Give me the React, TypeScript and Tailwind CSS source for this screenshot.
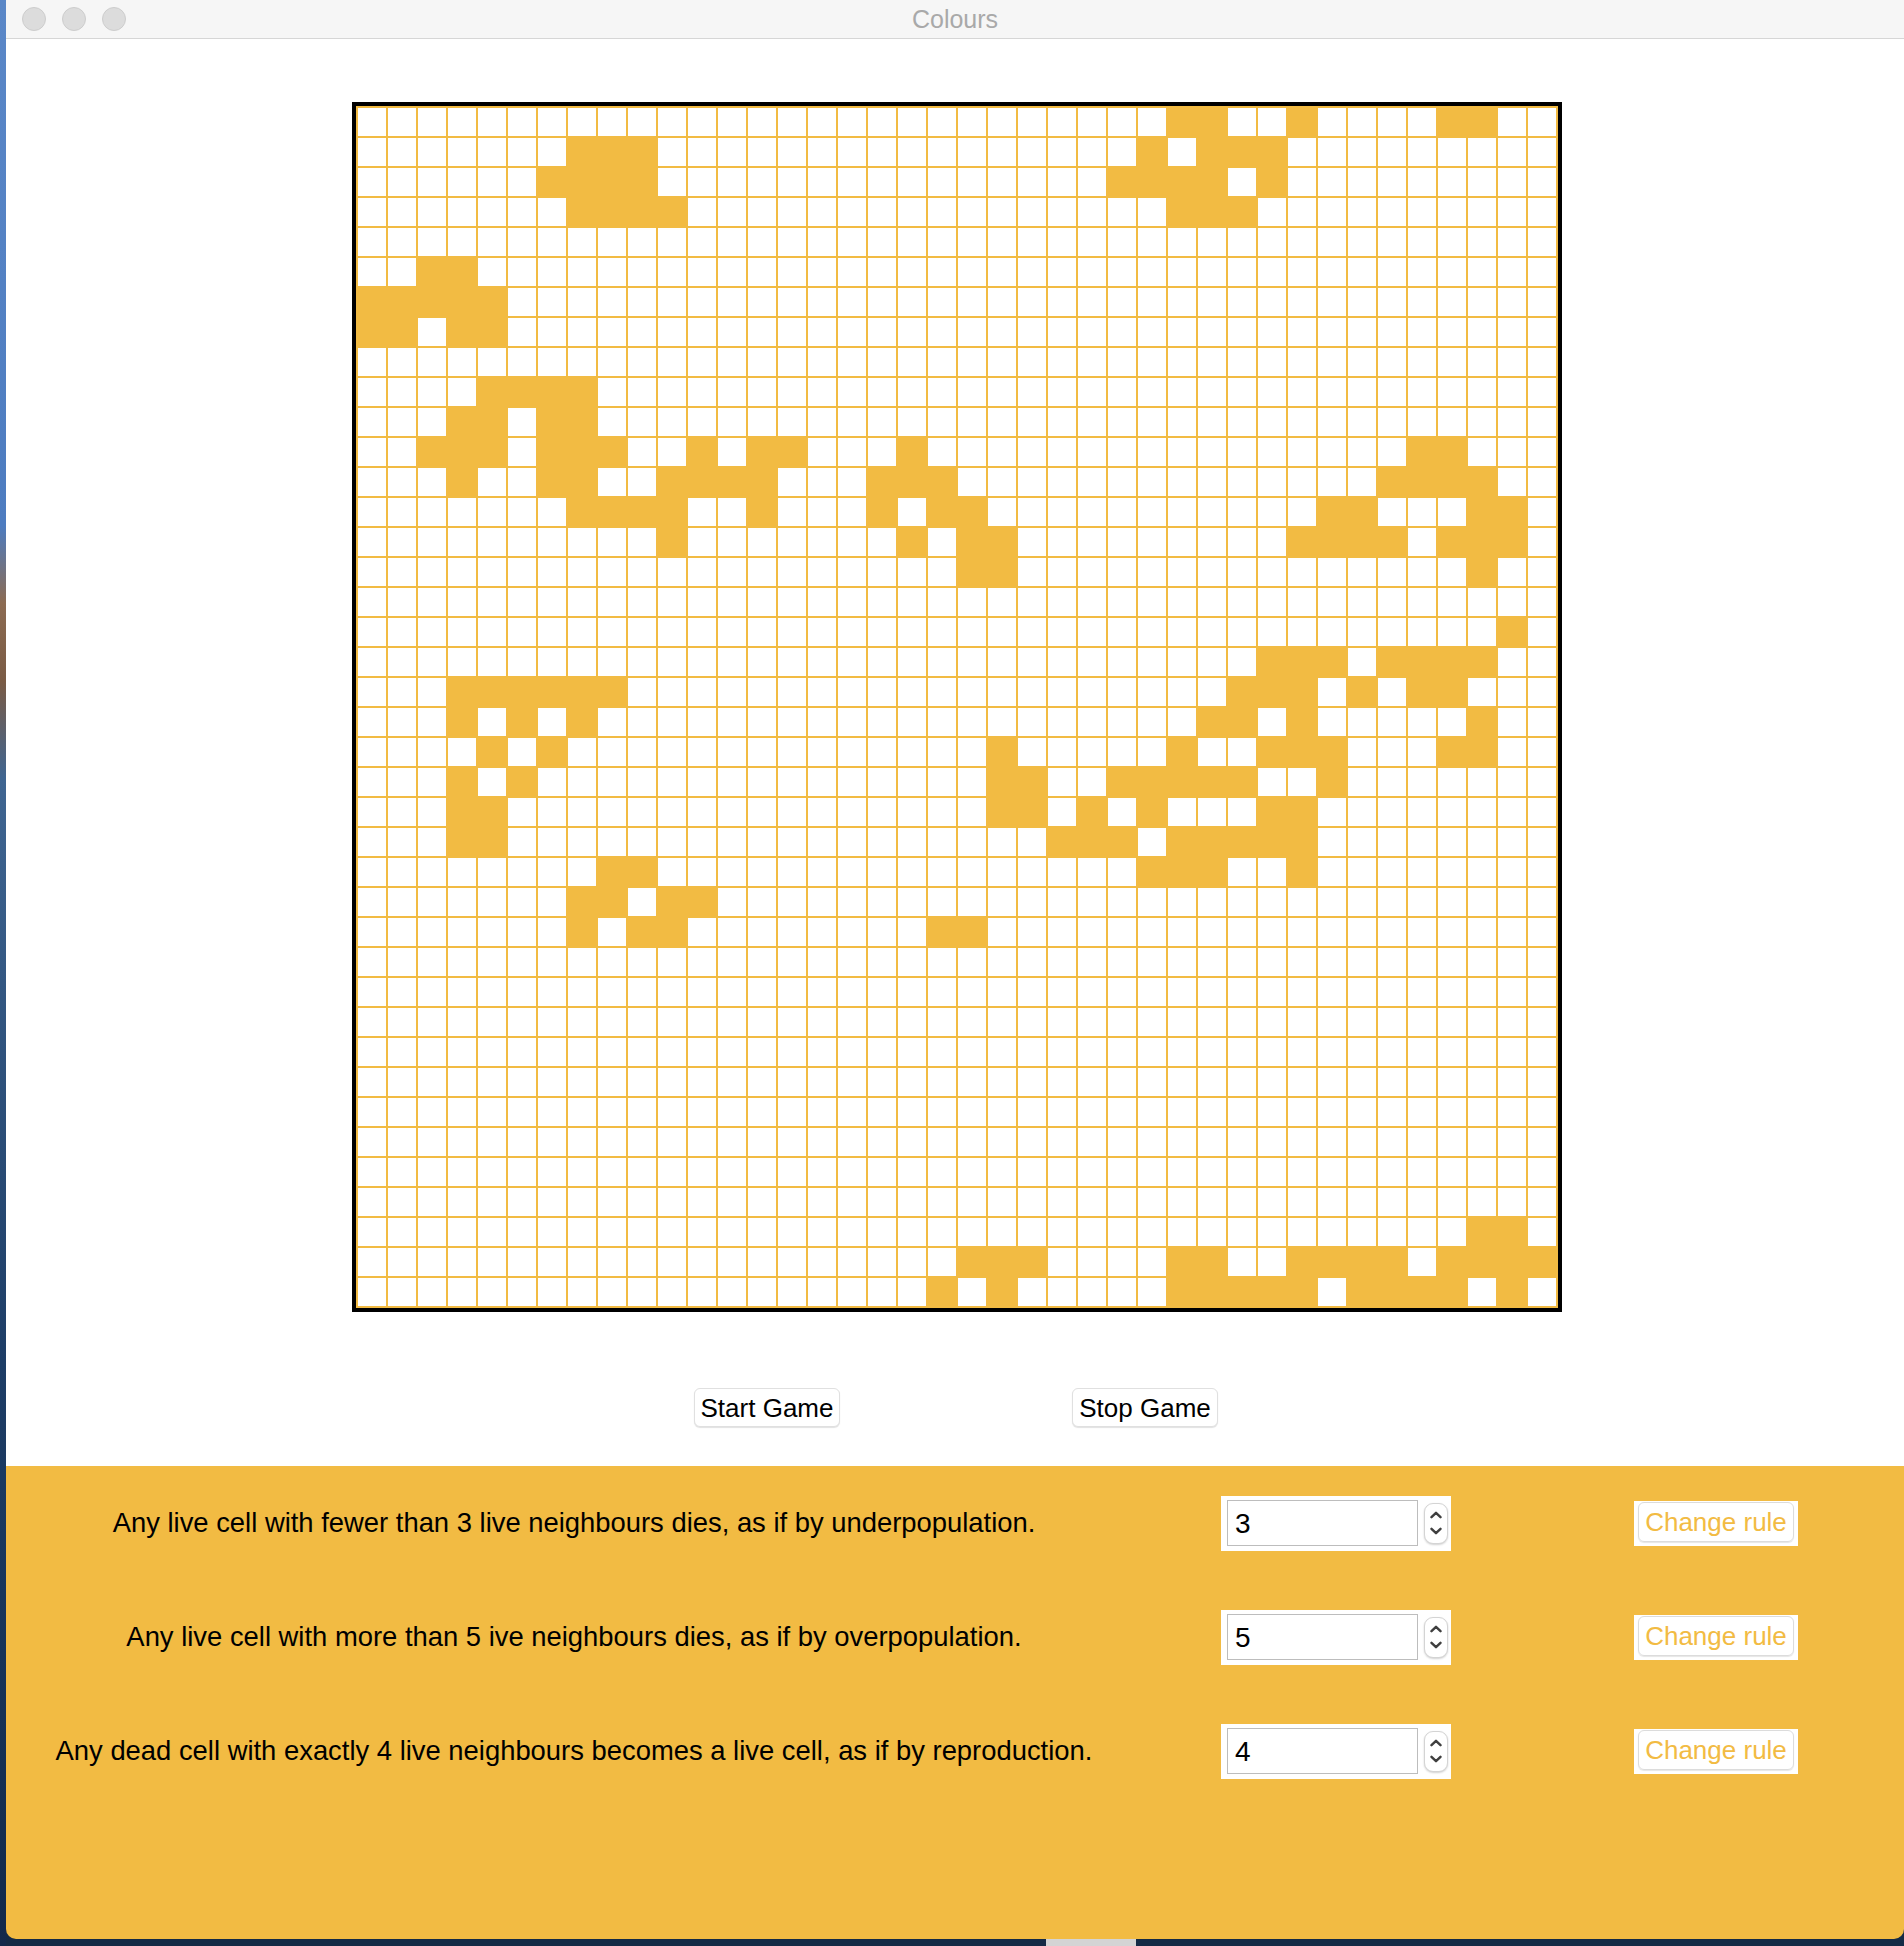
const SIZE = 40;

// live cells per row (row -> columns)
const LIVE: Record<number, number[]> = {
  0: [27, 28, 31, 36, 37],
  1: [7, 8, 9, 26, 28, 29, 30],
  2: [6, 7, 8, 9, 25, 26, 27, 28, 30],
  3: [7, 8, 9, 10, 27, 28, 29],
  5: [2, 3],
  6: [0, 1, 2, 3, 4],
  7: [0, 1, 3, 4],
  9: [4, 5, 6, 7],
  10: [3, 4, 6, 7],
  11: [2, 3, 4, 6, 7, 8, 11, 13, 14, 18, 35, 36],
  12: [3, 6, 7, 10, 11, 12, 13, 17, 18, 19, 34, 35, 36, 37],
  13: [7, 8, 9, 10, 13, 17, 19, 20, 32, 33, 37, 38],
  14: [10, 18, 20, 21, 31, 32, 33, 34, 36, 37, 38],
  15: [20, 21, 37],
  17: [38],
  18: [30, 31, 32, 34, 35, 36, 37],
  19: [3, 4, 5, 6, 7, 8, 29, 30, 31, 33, 35, 36],
  20: [3, 5, 7, 28, 29, 31, 37],
  21: [4, 6, 21, 27, 30, 31, 32, 36, 37],
  22: [3, 5, 21, 22, 25, 26, 27, 28, 29, 32],
  23: [3, 4, 21, 22, 24, 26, 30, 31],
  24: [3, 4, 23, 24, 25, 27, 28, 29, 30, 31],
  25: [8, 9, 26, 27, 28, 31],
  26: [7, 8, 10, 11],
  27: [7, 9, 10, 19, 20],
  37: [37, 38],
  38: [20, 21, 22, 27, 28, 31, 32, 33, 34, 36, 37, 38, 39],
  39: [19, 21, 27, 28, 29, 30, 31, 33, 34, 35, 36, 38],
};

const RULES = [
  { text: 'Any live cell with fewer than 3 live neighbours dies, as if by underpopulation.', value: 3 },
  { text: 'Any live cell with more than 5 ive neighbours dies, as if by overpopulation.', value: 5 },
  { text: 'Any dead cell with exactly 4 live neighbours becomes a live cell, as if by reproduction.', value: 4 },
];

function Board() {
  const cells = [];
  for (let r = 0; r < SIZE; r++) {
    const row = LIVE[r] ?? [];
    for (let c = 0; c < SIZE; c++) {
      const alive = row.includes(c);
      cells.push(
        <div key={`${r}-${c}`} className={alive ? 'bg-[#f2bb43]' : 'bg-white'} />
      );
    }
  }
  return (
    <div className="border-4 border-black">
      <div className="grid grid-cols-[repeat(40,28px)] grid-rows-[repeat(40,28px)] gap-[2px] p-[2px] bg-[#f2bb43]">
        {cells}
      </div>
    </div>
  );
}

function Spinner({ value }: { value: number }) {
  return (
    <div className="flex items-center w-[230px] h-[55px] bg-white pl-[6px] pr-[3px]">
      <div className="w-[192px] h-[46px] border border-[#bdbdbd] bg-white flex items-center pl-[7px] pt-[2px] text-[28px] text-black">
        {value}
      </div>
      {/* stepper */}
      <div className="ml-[6px] w-[24px] h-[41px] rounded-[9px] border border-[#d4d4d4] bg-white shadow-[0_1px_2px_rgba(0,0,0,0.18)] flex flex-col items-center justify-center gap-[8px]">
        <svg width="12" height="8" viewBox="0 0 12 8" fill="none">
          <path d="M1.5 6.2 L6 1.8 L10.5 6.2" stroke="#3f3f3f" strokeWidth="2.4" strokeLinecap="round" strokeLinejoin="round" />
        </svg>
        <svg width="12" height="8" viewBox="0 0 12 8" fill="none">
          <path d="M1.5 1.8 L6 6.2 L10.5 1.8" stroke="#3f3f3f" strokeWidth="2.4" strokeLinecap="round" strokeLinejoin="round" />
        </svg>
      </div>
    </div>
  );
}

export default function App() {
  return (
    <div className="flex w-[1904px] h-[1946px] bg-[#142a45] font-['Liberation_Sans',Arial,sans-serif]">
      {/* desktop strip */}
      <div className="w-[6px] h-full bg-[linear-gradient(to_bottom,#5a87c7_0%,#4d7cc0_27%,#8c6b52_31%,#7a5b45_35%,#3f6591_40%,#1d3d66_70%,#13294a_100%)]" />

      <div className="flex-1 flex flex-col">
        {/* window */}
        <div className="flex flex-col h-[1939px] rounded-b-[10px] overflow-hidden">
          {/* title bar */}
          <div className="h-[39px] bg-[#f6f6f6] border-b border-[#d6d6d6] grid grid-cols-[1fr_auto_1fr] items-center">
            <div className="flex items-center gap-[16px] pl-[16px]">
              <div className="w-[24px] h-[24px] rounded-full bg-[#dcdcdc] border border-[#cdcdcd]" />
              <div className="w-[24px] h-[24px] rounded-full bg-[#dcdcdc] border border-[#cdcdcd]" />
              <div className="w-[24px] h-[24px] rounded-full bg-[#dcdcdc] border border-[#cdcdcd]" />
            </div>
            <div className="text-[25px] text-[#a9a9a9] leading-none">Colours</div>
            <div />
          </div>

          {/* board area */}
          <div className="h-[1427px] bg-white flex flex-col items-center pt-[63px]">
            <div className="pl-[4px]">
              <Board />
            </div>
            <div className="flex gap-[232px] mt-[76px] pl-[2px]">
              <button className="w-[146px] h-[39px] bg-white border border-[#e0e0e0] rounded-[6px] shadow-[0_1px_1px_rgba(0,0,0,0.12)] text-[26px] text-black leading-none">
                Start Game
              </button>
              <button className="w-[146px] h-[39px] bg-white border border-[#e0e0e0] rounded-[6px] shadow-[0_1px_1px_rgba(0,0,0,0.12)] text-[26px] text-black leading-none">
                Stop Game
              </button>
            </div>
          </div>

          {/* rules panel */}
          <div className="flex-1 bg-[#f2bb43]">
            {RULES.map((rule) => (
              <div key={rule.value} className="flex items-center h-[114px]">
                <div className="w-[1136px] text-center text-[27.4px] text-black whitespace-nowrap">
                  {rule.text}
                </div>
                <div className="ml-[79px]">
                  <Spinner value={rule.value} />
                </div>
                <div className="ml-[183px] w-[164px] h-[45px] bg-white pt-[1px] px-[4px] pb-[4px]">
                  <div className="h-full rounded-[6px] border border-[#dcdcdc] shadow-[0_1px_1px_rgba(0,0,0,0.1)] flex items-center justify-center text-[26px] text-[#f2bb43] leading-none">
                    Change rule
                  </div>
                </div>
              </div>
            ))}
          </div>
        </div>

        {/* dock edge */}
        <div className="flex-1 flex justify-start">
          <div className="ml-[1040px] w-[90px] h-full bg-[#d4d4d4]" />
        </div>
      </div>
    </div>
  );
}
